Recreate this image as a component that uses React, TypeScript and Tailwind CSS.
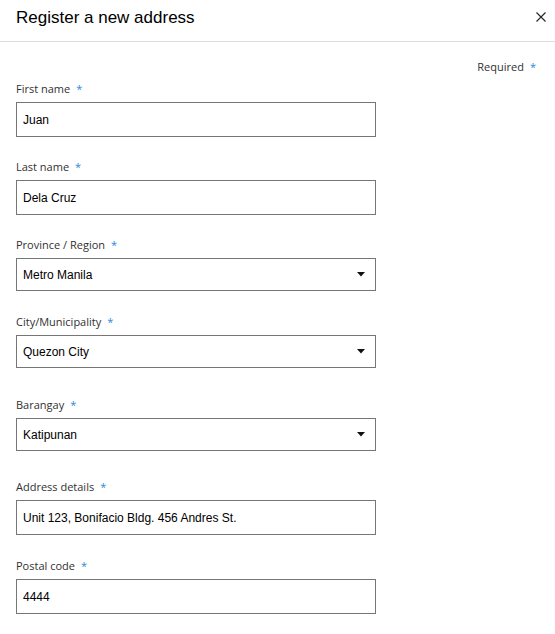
import React from "react";

type Field = {
  label: string;
  value: string;
  select?: boolean;
  gap: string;
};

const fields: Field[] = [
  { label: "First name", value: "Juan", gap: "mt-[6px]" },
  { label: "Last name", value: "Dela Cruz", gap: "mt-[22px]" },
  { label: "Province / Region", value: "Metro Manila", select: true, gap: "mt-[22px]" },
  { label: "City/Municipality", value: "Quezon City", select: true, gap: "mt-[23px]" },
  { label: "Barangay", value: "Katipunan", select: true, gap: "mt-[29px]" },
  { label: "Address details", value: "Unit 123, Bonifacio Bldg. 456 Andres St.", gap: "mt-[28px]" },
  { label: "Postal code", value: "4444", gap: "mt-[23px]" },
];

const labelFont = "font-['Open_Sans',_'Noto_Sans',_sans-serif]";
const inputFont = "font-['Liberation_Sans',_Arial,_sans-serif]";

const App: React.FC = () => {
  return (
    <div className="w-[555px] h-[634px] bg-white overflow-hidden">
      <div className="h-[42px] flex items-center justify-between border-b border-[#dcdcdc] pl-4 pr-[5px]">
        <h1 className={`${inputFont} text-[17px] leading-none text-black -mt-[7px]`}>Register a new address</h1>
        <button type="button" className="w-[10px] h-[10px] mr-[4px] -mt-[7px]">
          <svg viewBox="0 0 10 10" width="10" height="10" className="block">
            <path d="M0.5 0.5 L9.5 9.5 M9.5 0.5 L0.5 9.5" stroke="#222" strokeWidth="1.1" />
          </svg>
        </button>
      </div>

      <div className="px-4">
        <div className={`${labelFont} mt-[17px] flex justify-end pr-[3px] text-[11px] leading-4 text-[#323130]`}>
          Required<span className="ml-[6px] text-[#2b88d8]">*</span>
        </div>

        {fields.map((f) => (
          <div key={f.label} className={f.gap}>
            <label className={`${labelFont} block text-[11px] leading-4 text-[#323130] mb-[5px]`}>
              {f.label}
              <span className="ml-[6px] text-[#2b88d8]">*</span>
            </label>
            <div
              className={`${inputFont} w-[360px] ${f.select ? "h-[33px]" : "h-[35px]"} border border-[#767676] flex items-center justify-between pl-[6px] pr-[10px] text-[12px] text-black`}
            >
              <span>{f.value}</span>
              {f.select && (
                <svg width="8" height="5" viewBox="0 0 8 5" className="block">
                  <path d="M0 0 H8 L4 4.5 Z" fill="#111" />
                </svg>
              )}
            </div>
          </div>
        ))}
      </div>
    </div>
  );
};

export default App;
